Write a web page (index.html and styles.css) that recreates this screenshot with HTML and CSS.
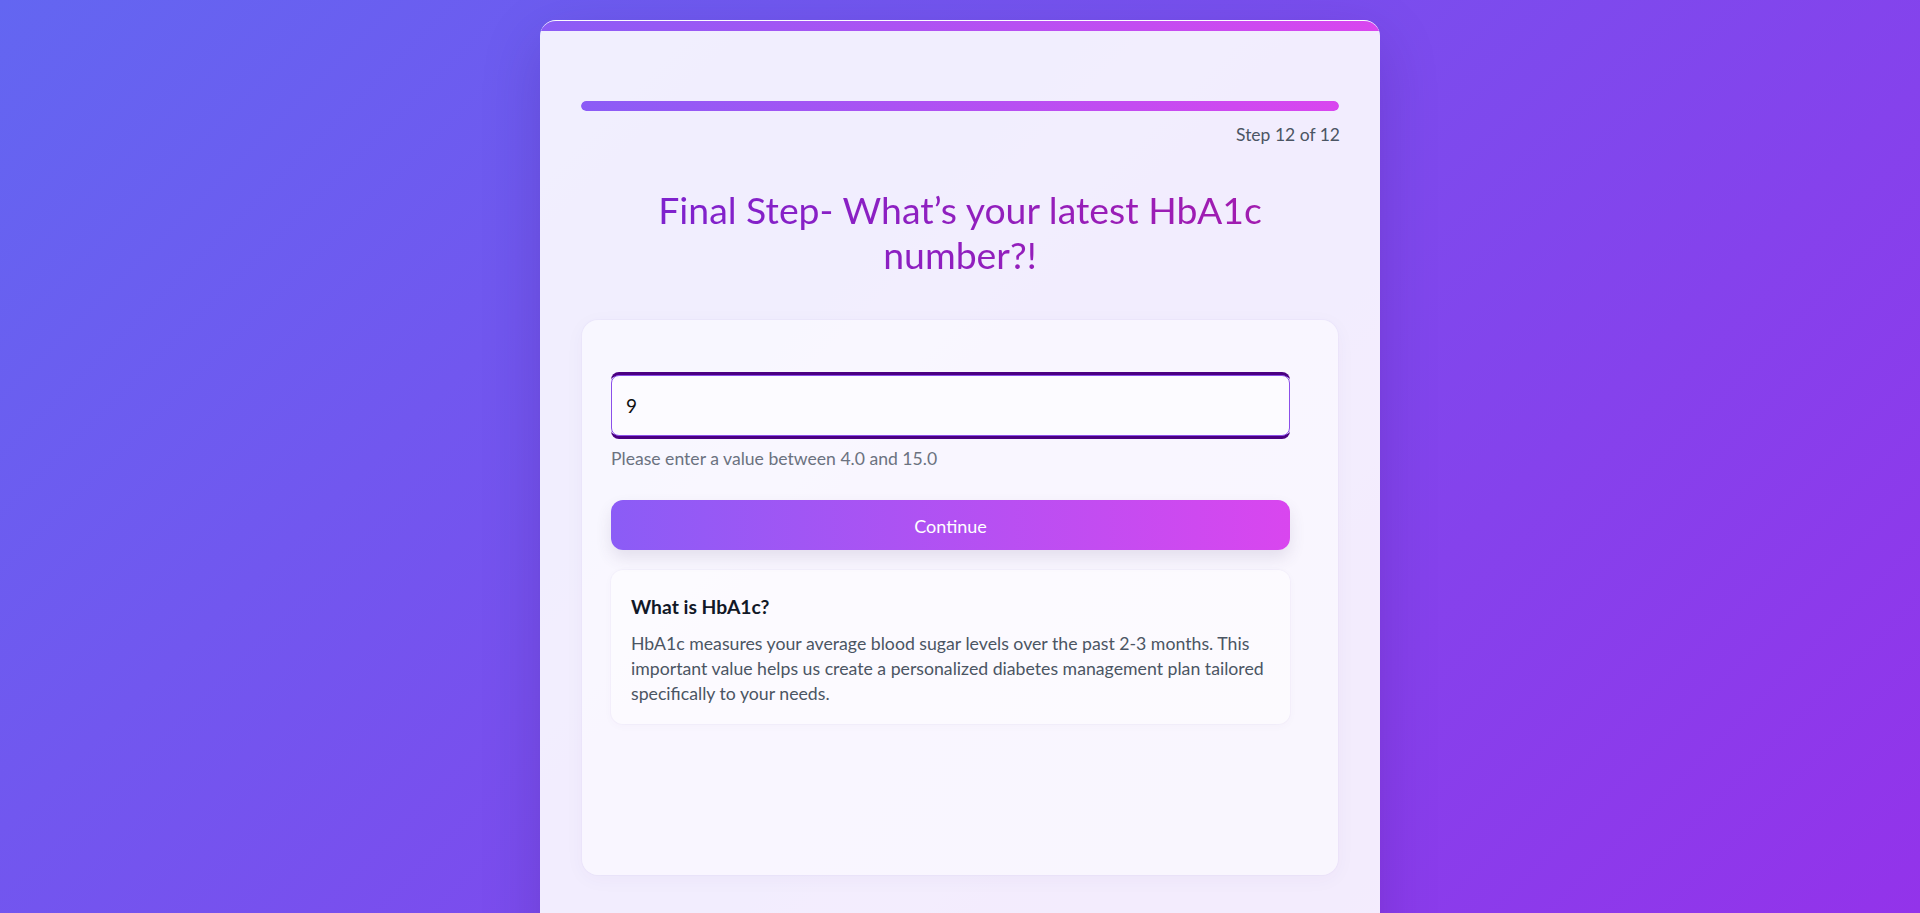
FILE: index.html
```html
<!DOCTYPE html>
<html lang="en">
<head>
	<meta charset="UTF-8">
	<title>HbA1c - Step 12</title>
	<link rel="stylesheet" href="styles.css">
</head>
<body>

	<div class="page">
		<div class="card">
			<div class="card-bar"></div>

			<div class="card-body">
				<!-- progress -->
				<div class="progress">
					<div class="progress-fill" style="width: 100%;"></div>
				</div>
				<p class="progress-text">Step 12 of 12</p>

				<h1 class="step-title">Final Step- What’s your latest HbA1c number?!</h1>

				<!-- form -->
				<div class="step-panel">
					<div class="field">
						<input type="text" class="field-input" value="9">
					</div>
					<p class="field-help">Please enter a value between 4.0 and 15.0</p>

					<button type="button" class="btn-continue">Continue</button>

					<div class="info-box">
						<h3>What is HbA1c?</h3>
						<p>HbA1c measures your average blood sugar levels over the past 2-3 months. This important value helps us create a personalized diabetes management plan tailored specifically to your needs.</p>
					</div>
				</div>
			</div>
		</div>
	</div>

</body>
</html>
```

FILE: styles.css
```css
html, body{ margin: 0; padding: 0; }
body{
	font-family: "Lato", "Open Sans", sans-serif;
	font-size: 16px;
	line-height: 1.5;
	min-height: 100vh;
	background: linear-gradient(135deg, #6366f1 0%, #9333ea 100%);
	background-attachment: fixed;
}
h1, h3, p{ margin: 0; }
button{
	background: none;
	border: 0;
	color: inherit;
	font: inherit;
	padding: 0;
	cursor: pointer;
}

.page{
	display: flex;
	justify-content: center;
	padding-top: 20px;
}

.card{
	width: 840px;
	border-radius: 16px;
	overflow: hidden;
	background: rgba(255, 255, 255, 0.9);
	border-top: 1px solid rgba(255, 255, 255, 0.7);
	box-shadow: 0 20px 60px rgba(40, 10, 90, 0.18);
}
.card-bar{
	height: 10px;
	background: linear-gradient(90deg, #8b5cf6, #d946ef);
}
.card-body{
	padding: 70px 40px 120px;
}

/* progress */
.progress{
	height: 10px;
	margin: 0 1px;
	border-radius: 5px;
	background: #e9e3fb;
	overflow: hidden;
}
.progress-fill{
	height: 100%;
	border-radius: 5px;
	background: linear-gradient(90deg, #8b5cf6, #d946ef);
}
.progress-text{
	margin-top: 12px;
	text-align: right;
	font-size: 17.5px;
	line-height: 24px;
	color: #4b5563;
}

.step-title{
	width: 620px;
	margin: 40px auto 43px;
	font-size: 37.4px;
	font-weight: 400;
	line-height: 45px;
	text-align: center;
	background: linear-gradient(90deg, #7e22ce, #a21caf);
	-webkit-background-clip: text;
	background-clip: text;
	color: transparent;
}

/* panel */
.step-panel{
	margin: 0 2px;
	min-height: 555px;
	box-sizing: border-box;
	padding: 52px 48px 40px 29px;
	border-radius: 16px;
	background: rgba(255, 255, 255, 0.5);
	box-shadow: 0 0 0 1px rgba(120, 90, 200, 0.03), 0 4px 20px rgba(80, 60, 140, 0.04);
}

.field{
	border-top: 4px solid #4b0082;
	border-bottom: 4px solid #4b0082;
	border-radius: 8px;
}
.field-input{
	display: block;
	width: 100%;
	height: 61px;
	box-sizing: border-box;
	margin: -1px 0;
	padding: 0 14px;
	border: 1.5px solid #8b4fe9;
	border-radius: 8px;
	background: #fcfbff;
	font-family: inherit;
	font-size: 19px;
	color: #111;
	outline: none;
}
.field-help{
	margin-top: 8px;
	font-size: 17.6px;
	line-height: 24px;
	color: #6b7280;
}

.btn-continue{
	display: block;
	width: 100%;
	height: 50px;
	margin-top: 29px;
	padding-top: 2px;
	border-radius: 12px;
	background: linear-gradient(90deg, #8b5cf6, #d946ef);
	color: #fff;
	font-size: 18px;
	box-shadow: 0 8px 16px rgba(70, 60, 110, 0.12);
}

.info-box{
	margin-top: 20px;
	padding: 24px 20px 18px;
	border-radius: 12px;
	background: rgba(255, 255, 255, 0.45);
	box-shadow: 0 0 0 1px rgba(120, 90, 200, 0.03), 0 2px 8px rgba(80, 60, 140, 0.03);
}
.info-box h3{
	font-size: 19.3px;
	font-weight: 700;
	line-height: 25px;
	color: #111827;
}
.info-box p{
	margin-top: 12px;
	font-size: 17.7px;
	line-height: 25px;
	color: #4b5563;
}
```
